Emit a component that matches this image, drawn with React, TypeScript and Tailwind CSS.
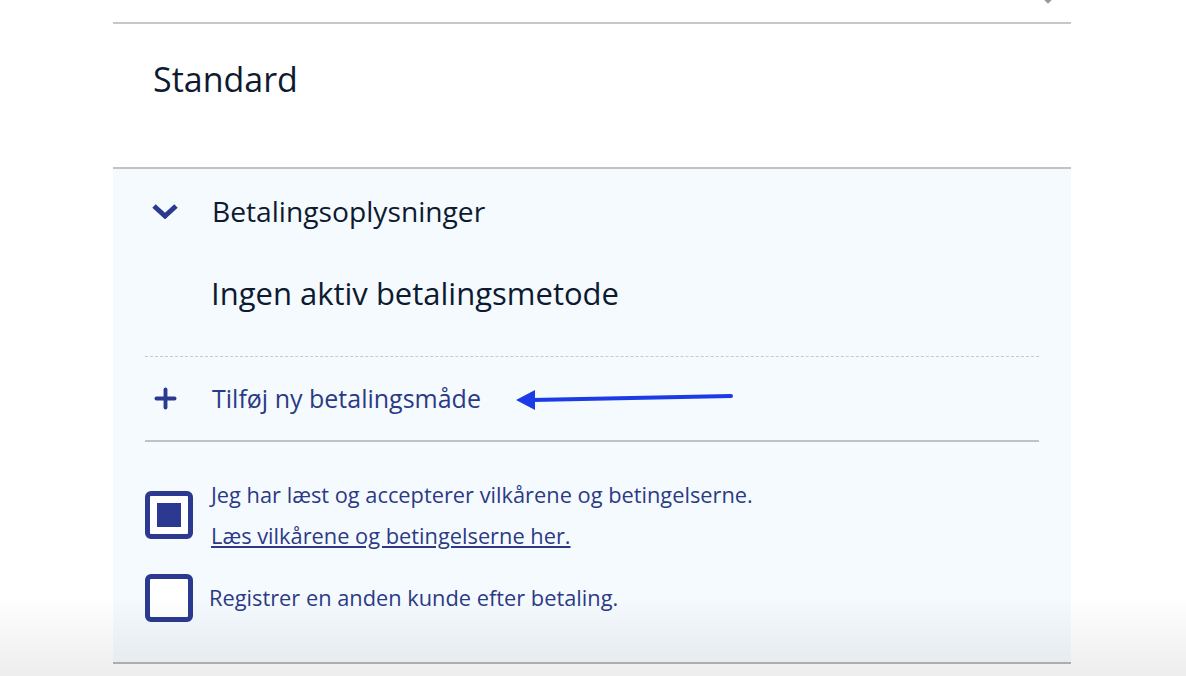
import { Plus } from 'lucide-react';

const font = { fontFamily: '"Open Sans", "Noto Sans", sans-serif' };

function Chevron() {
  return (
    <svg width="26" height="16" viewBox="0 0 26 16">
      <path d="M2 3 L13 13 L24 3" fill="none" stroke="#2b3990" strokeWidth="5" strokeLinejoin="miter" />
    </svg>
  );
}

function Arrow() {
  return (
    <svg width="220" height="24" viewBox="0 0 220 24" className="absolute left-[371px] top-[29px]">
      <path d="M16 14 L215 10" stroke="#1b3be6" strokeWidth="4" strokeLinecap="round" />
      <path d="M0 14 L19 4 L19 24 Z" fill="#1b3be6" />
    </svg>
  );
}

function Checkbox({ checked }: { checked?: boolean }) {
  return (
    <span className="flex h-[48px] w-[48px] shrink-0 items-center justify-center rounded-[6px] border-[5px] border-[#2b3990] bg-white">
      {checked && <span className="h-[24px] w-[24px] bg-[#2b3990]" />}
    </span>
  );
}

export default function App() {
  return (
    <div className="relative h-[676px] w-[1186px] overflow-hidden bg-white" style={font}>
      <div className="ml-[113px] w-[958px]">
        <div className="relative h-[22px]">
          <svg width="16" height="10" viewBox="0 0 16 10" className="absolute left-[927px] top-[-5px]">
            <path d="M2 1 L8 7 L14 1" fill="none" stroke="#9a9a9a" strokeWidth="2.5" />
          </svg>
        </div>
        <div className="h-[2px] bg-[#c8c8c8]" />
        <div className="flex h-[143px] items-start pl-[40px] pt-[35px]">
          <h2 className="text-[34px] font-medium leading-[40px] text-[#0d1a30]">Standard</h2>
        </div>
        <div className="h-[2px] bg-[#c2c2c2]" />

        <div className="h-[493px] bg-[#f5faff] px-[32px]">
          <div className="flex h-[84px] items-center">
            <span className="flex w-[40px] justify-center"><Chevron /></span>
            <span className="ml-[27px] text-[28.2px] leading-none text-[#0d1a30]">Betalingsoplysninger</span>
          </div>
          <div className="flex h-[80px] items-center pl-[66px]">
            <span className="text-[31px] font-medium leading-none text-[#0d1a30]">Ingen aktiv betalingsmetode</span>
          </div>
          <div className="h-[23px]" />
          <div className="relative flex h-[84px] items-center border-t border-dashed border-[#c4cad2]">
            <span className="flex w-[40px] justify-center text-[#2b3990]"><Plus size={31} strokeWidth={3} /></span>
            <span className="ml-[27px] text-[25px] leading-none text-[#2c3a85]">Tilføj ny betalingsmåde</span>
            <Arrow />
          </div>
          <div className="h-[2px] bg-[#c2c2c2]" />

          <div className="mt-[49px] flex items-start gap-[18px]">
            <Checkbox checked />
            <div className="-mt-[9px] flex flex-col">
              <span className="text-[21.8px] leading-[26px] text-[#2c3a85]">Jeg har læst og accepterer vilkårene og betingelserne.</span>
              <a className="mt-[15px] text-[21.8px] leading-[26px] text-[#2c3a85] underline underline-offset-2">Læs vilkårene og betingelserne her.</a>
            </div>
          </div>
          <div className="mt-[25px] flex items-center gap-[16px]">
            <Checkbox />
            <span className="text-[21.8px] leading-[26px] text-[#2c3a85]">Registrer en anden kunde efter betaling.</span>
          </div>
        </div>
        <div className="h-[2px] bg-[#b8b8b8]" />
      </div>
      <div className="pointer-events-none absolute bottom-0 left-0 h-[80px] w-full bg-gradient-to-b from-transparent to-black/[0.07]" />
    </div>
  );
}
